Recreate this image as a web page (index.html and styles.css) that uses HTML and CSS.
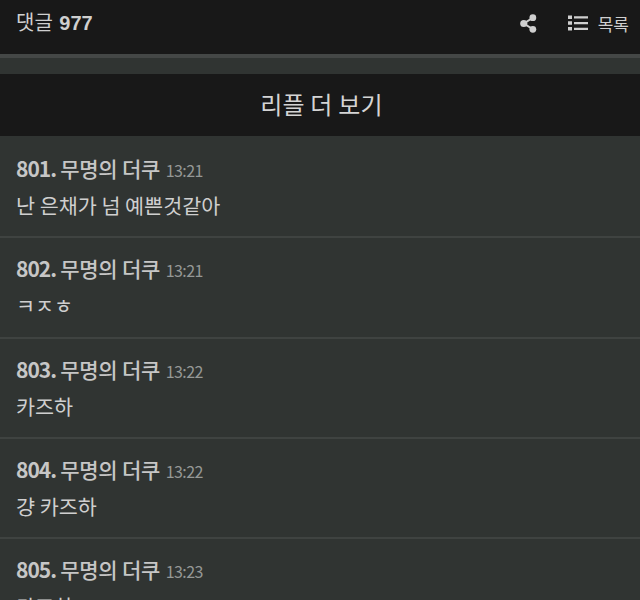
FILE: index.html
```html
<!DOCTYPE html>
<html>

<head>
    <meta charset="utf-8">
    <title>댓글 977</title>
    <link rel="stylesheet" href="styles.css">
</head>

<body>
    <header class="topbar">
        <h1 class="count">댓글 <b>977</b></h1>
        <svg class="share" width="17" height="19" viewBox="0 0 18 20">
            <path d="M13.5 4 L4 10 L13.5 16" fill="none" stroke="#cfcfcf" stroke-width="2"/>
            <circle cx="13.6" cy="3.8" r="3.6" fill="#cfcfcf"/>
            <circle cx="4" cy="10" r="3.8" fill="#cfcfcf"/>
            <circle cx="13.6" cy="16.2" r="3.6" fill="#cfcfcf"/>
        </svg>
        <a class="list-link">
            <svg width="20" height="16" viewBox="0 0 20 16">
                <path d="M0 0.5h4v3.5h-4zM0 6.2h4v3.5h-4zM0 12h4v3.5h-4z" fill="#cfcfcf"/>
                <path d="M6 1.2h14v2.4h-14zM6 6.9h14v2.4h-14zM6 12.7h14v2.4h-14z" fill="#cfcfcf"/>
            </svg>
            <span>목록</span>
        </a>
    </header>
    <div class="strip"></div>
    <div class="more">리플 더 보기</div>
    <ul class="replies">
        <li>
            <p class="head"><b>801.</b> <span class="name">무명의 더쿠</span> <time>13:21</time></p>
            <p class="body">난 은채가 넘 예쁜것같아</p>
        </li>
        <li>
            <p class="head"><b>802.</b> <span class="name">무명의 더쿠</span> <time>13:21</time></p>
            <p class="body">ㅋㅈㅎ</p>
        </li>
        <li>
            <p class="head"><b>803.</b> <span class="name">무명의 더쿠</span> <time>13:22</time></p>
            <p class="body">카즈하</p>
        </li>
        <li>
            <p class="head"><b>804.</b> <span class="name">무명의 더쿠</span> <time>13:22</time></p>
            <p class="body">걍 카즈하</p>
        </li>
        <li>
            <p class="head"><b>805.</b> <span class="name">무명의 더쿠</span> <time>13:23</time></p>
            <p class="body">카즈하</p>
        </li>
    </ul>
</body>

</html>
```

FILE: styles.css
```css
html, body {
    height: 600px;
    overflow: hidden;
}

body {
    margin: 0;
    background-color: #303432;
    color: #cfcfcf;
    font-family: "Noto Sans CJK KR", "Noto Sans", sans-serif;
}

.topbar {
    display: flex;
    align-items: center;
    height: 58px;
    padding: 0 11px 8px 16px;
    box-sizing: border-box;
    background-color: #181818;
    border-bottom: 4px solid #444746;
}

.count {
    margin: 0 auto 0 0;
    font-family: "Liberation Sans", "Noto Sans CJK KR", sans-serif;
    font-size: 20px;
    font-weight: normal;
    line-height: 28px;
}

.count b {
    margin-left: 1px;
    font-weight: bold;
}

.share {
    margin-right: 31px;
}

.list-link {
    display: flex;
    align-items: center;
    gap: 10px;
    font-size: 17px;
}

.strip {
    height: 16px;
}

.more {
    height: 62px;
    padding-left: 3px;
    line-height: 60px;
    text-align: center;
    font-size: 24px;
    letter-spacing: 0.2px;
    background-color: #181818;
    color: #d4d4d4;
}

.replies {
    list-style: none;
    margin: 0;
    padding: 2px 0 0;
}

.replies li {
    height: 100.3px;
    padding: 15px 16px 0;
    box-sizing: border-box;
    border-bottom: 2px solid #3f4341;
}

.head {
    margin: 0;
    font-size: 21px;
    line-height: 30px;
    color: #c6c6c6;
}

.head b {
    font-weight: 700;
    letter-spacing: -1px;
}

.head .name {
    margin-left: -0.5px;
    font-weight: 500;
    letter-spacing: -0.25px;
}

.head time {
    margin-left: 1px;
    font-size: 16px;
    letter-spacing: -0.6px;
    color: #959896;
}

.body {
    margin: 5px 0 0;
    font-size: 20.7px;
    line-height: 30px;
}
```
